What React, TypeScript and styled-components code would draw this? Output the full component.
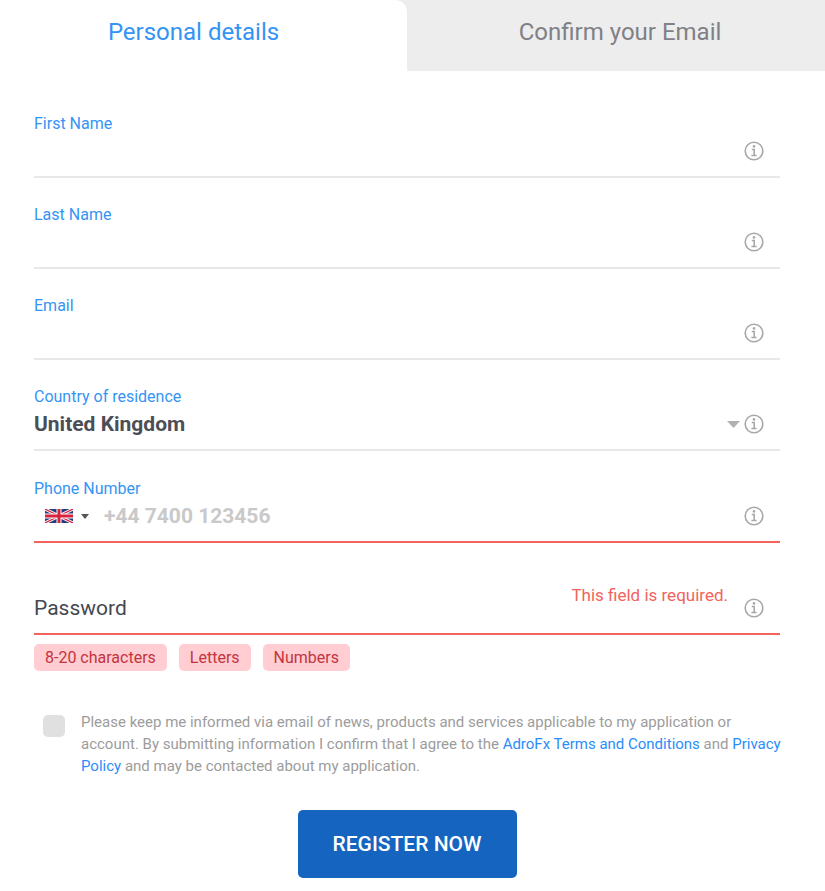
import React from "react";
import styled, { createGlobalStyle } from "styled-components";

const blue = "#3494f5";
const red = "#f2635c";

const GlobalStyle = createGlobalStyle`
  *, *::before, *::after { box-sizing: border-box; }
  body { margin: 0; background: #fff; }
  body, button, input, select { font-family: Roboto, "Liberation Sans", sans-serif; }
`;

const Tabs = styled.nav`
  display: grid;
  grid-template-columns: 407fr 418fr;
  background: #ededed;
`;

const Tab = styled.button<{ $active?: boolean }>`
  height: 71px;
  padding: 0 0 8px;
  border: 0;
  font-size: 24px;
  line-height: 28px;
  color: ${(p) => (p.$active ? blue : "#808086")};
  background: ${(p) => (p.$active ? "#fff" : "#ededed")};
  border-top-right-radius: ${(p) => (p.$active ? "12px" : "0")};
  padding-left: ${(p) => (p.$active ? "0" : "8px")};
  padding-right: ${(p) => (p.$active ? "20px" : "0")};
`;

const Form = styled.form`
  display: flex;
  flex-direction: column;
  padding: 16px 45px 13px 34px;
`;

const Field = styled.div<{ $error?: boolean }>`
  padding: ${(p) => (p.$error ? "28px" : "27px")} 16px 8px 0;
  border-bottom: 2px solid ${(p) => (p.$error ? red : "#e8e8e8")};
`;

const Label = styled.label`
  display: block;
  height: 20px;
  font-size: 16px;
  line-height: 20px;
  color: ${blue};
`;

const ControlRow = styled.div`
  display: flex;
  align-items: center;
  height: 34px;
`;

const TextInput = styled.input`
  flex: 1;
  min-width: 0;
  height: 34px;
  padding: 0;
  border: 0;
  outline: 0;
  background: transparent;
  font-size: 21px;
  color: #45474f;
  &::placeholder {
    color: #c9c9c9;
    font-weight: 700;
    opacity: 1;
  }
`;

const CountrySelect = styled.select`
  grid-area: 1 / 1;
  width: 100%;
  height: 34px;
  padding: 0;
  border: 0;
  outline: 0;
  appearance: none;
  background: transparent;
  font-size: 21px;
  font-weight: 700;
  color: #4c4e57;
`;

const SelectBox = styled.div`
  flex: 1;
  display: grid;
  align-items: center;
  svg {
    grid-area: 1 / 1;
    justify-self: end;
    margin-right: 4px;
    pointer-events: none;
  }
`;

const DialButton = styled.button`
  display: flex;
  align-items: center;
  gap: 8px;
  height: 34px;
  padding: 0 15px 0 11px;
  border: 0;
  background: none;
`;

const InfoButton = styled.button`
  display: flex;
  padding: 0;
  border: 0;
  background: none;
`;

const PasswordField = styled.div`
  display: grid;
  grid-template-columns: 1fr auto;
  column-gap: 16px;
  padding: 28px 16px 8px 0;
  border-bottom: 2px solid ${red};
`;

const ErrorText = styled.span`
  grid-column: 1;
  justify-self: end;
  height: 20px;
  padding-top: 14px;
  font-size: 17px;
  line-height: 20px;
  color: ${red};
`;

const PasswordLabel = styled.label`
  grid-area: 2 / 1;
  justify-self: start;
  font-size: 21px;
  line-height: 34px;
  color: #45474f;
`;

const PasswordInput = styled(TextInput)`
  grid-area: 2 / 1;
`;

const PasswordInfo = styled(InfoButton)`
  grid-area: 2 / 2;
  align-self: center;
`;

const Rules = styled.ul`
  display: flex;
  gap: 12px;
  margin: 9px 0 0;
  padding: 0;
  list-style: none;
`;

const Rule = styled.li`
  padding: 0 11px;
  border-radius: 5px;
  background: #ffcdd2;
  font-size: 16px;
  line-height: 27px;
  color: #c43440;
`;

const Consent = styled.div`
  display: flex;
  align-items: flex-start;
  margin: 40px -6px 0 0;
  padding-left: 9px;
`;

const Checkbox = styled.input`
  flex: none;
  appearance: none;
  width: 22px;
  height: 22px;
  margin: 4px 16px 0 0;
  border-radius: 5px;
  background: #e0e0e0;
  &:checked { background: ${blue}; }
`;

const ConsentText = styled.label`
  font-size: 15px;
  line-height: 22px;
  color: #9c9c9c;
`;

const Link = styled.a`
  color: #2a8dfa;
  text-decoration: none;
`;

const Submit = styled.button`
  align-self: center;
  margin-top: 33px;
  padding: 0 35px;
  height: 68px;
  border: 0;
  border-radius: 5px;
  background: #1565c0;
  color: #fff;
  font-size: 21px;
  font-weight: 500;
`;

function InfoIcon() {
  return (
    <svg width="20" height="20" viewBox="0 0 20 20" fill="none" stroke="#a8a8a8" aria-hidden="true">
      <circle cx="10" cy="10" r="8.8" strokeWidth="1.6" />
      <circle cx="10" cy="5.4" r="1.3" fill="#a8a8a8" stroke="none" />
      <path d="M7.8 8.500h2.400v6M7.400 14.500h5.200" strokeWidth="1.6" />
    </svg>
  );
}

function Info({ about }: { about: string }) {
  return (
    <InfoButton type="button" aria-label={`About ${about}`}>
      <InfoIcon />
    </InfoButton>
  );
}

function UkFlag() {
  return (
    <svg width="28" height="14" viewBox="0 0 28 14" aria-hidden="true">
      <path fill="#273a7d" d="M0 0h28v14H0z" />
      <path stroke="#fff" strokeWidth="3" d="M0 0l28 14M28 0L0 14" />
      <path stroke="#d8233f" strokeWidth="1.2" d="M0 0l28 14M28 0L0 14" />
      <path stroke="#fff" strokeWidth="5" d="M14 0v14M0 7h28" />
      <path stroke="#d8233f" strokeWidth="3" d="M14 0v14M0 7h28" />
    </svg>
  );
}

function TextField({ id, label }: { id: string; label: string }) {
  return (
    <Field>
      <Label htmlFor={id}>{label}</Label>
      <ControlRow>
        <TextInput id={id} />
        <Info about={label} />
      </ControlRow>
    </Field>
  );
}

export default function App() {
  return (
    <>
      <GlobalStyle />
      <Tabs>
        <Tab type="button" $active>Personal details</Tab>
        <Tab type="button">Confirm your Email</Tab>
      </Tabs>
      <Form onSubmit={(e) => e.preventDefault()}>
        <TextField id="first" label="First Name" />
        <TextField id="last" label="Last Name" />
        <TextField id="email" label="Email" />
        <Field>
          <Label htmlFor="country">Country of residence</Label>
          <ControlRow>
            <SelectBox>
              <CountrySelect id="country">
                <option>United Kingdom</option>
              </CountrySelect>
              <svg width="13" height="7" viewBox="0 0 13 7" aria-hidden="true">
                <path d="M0 0h13L6.500 7z" fill="#b0b0b0" />
              </svg>
            </SelectBox>
            <Info about="Country of residence" />
          </ControlRow>
        </Field>
        <Field $error>
          <Label htmlFor="phone">Phone Number</Label>
          <ControlRow>
            <DialButton type="button" aria-label="United Kingdom +44">
              <UkFlag />
              <svg width="8" height="5" viewBox="0 0 8 5" aria-hidden="true">
                <path d="M0 0h8L4 5z" fill="#555" />
              </svg>
            </DialButton>
            <TextInput id="phone" type="tel" placeholder="+44 7400 123456" />
            <Info about="Phone Number" />
          </ControlRow>
        </Field>
        <PasswordField>
          <ErrorText id="password-error">This field is required.</ErrorText>
          <PasswordLabel htmlFor="password">Password</PasswordLabel>
          <PasswordInput id="password" type="password" aria-describedby="password-error" />
          <PasswordInfo type="button" aria-label="About Password">
            <InfoIcon />
          </PasswordInfo>
        </PasswordField>
        <Rules>
          <Rule>8-20 characters</Rule>
          <Rule>Letters</Rule>
          <Rule>Numbers</Rule>
        </Rules>
        <Consent>
          <Checkbox type="checkbox" id="consent" />
          <ConsentText htmlFor="consent">
            Please keep me informed via email of news, products and services applicable to my application or
            account. By submitting information I confirm that I agree to the{" "}
            <Link href="#terms">AdroFx Terms and Conditions</Link> and{" "}
            <Link href="#privacy">Privacy Policy</Link> and may be contacted about my application.
          </ConsentText>
        </Consent>
        <Submit type="submit">REGISTER NOW</Submit>
      </Form>
    </>
  );
}
